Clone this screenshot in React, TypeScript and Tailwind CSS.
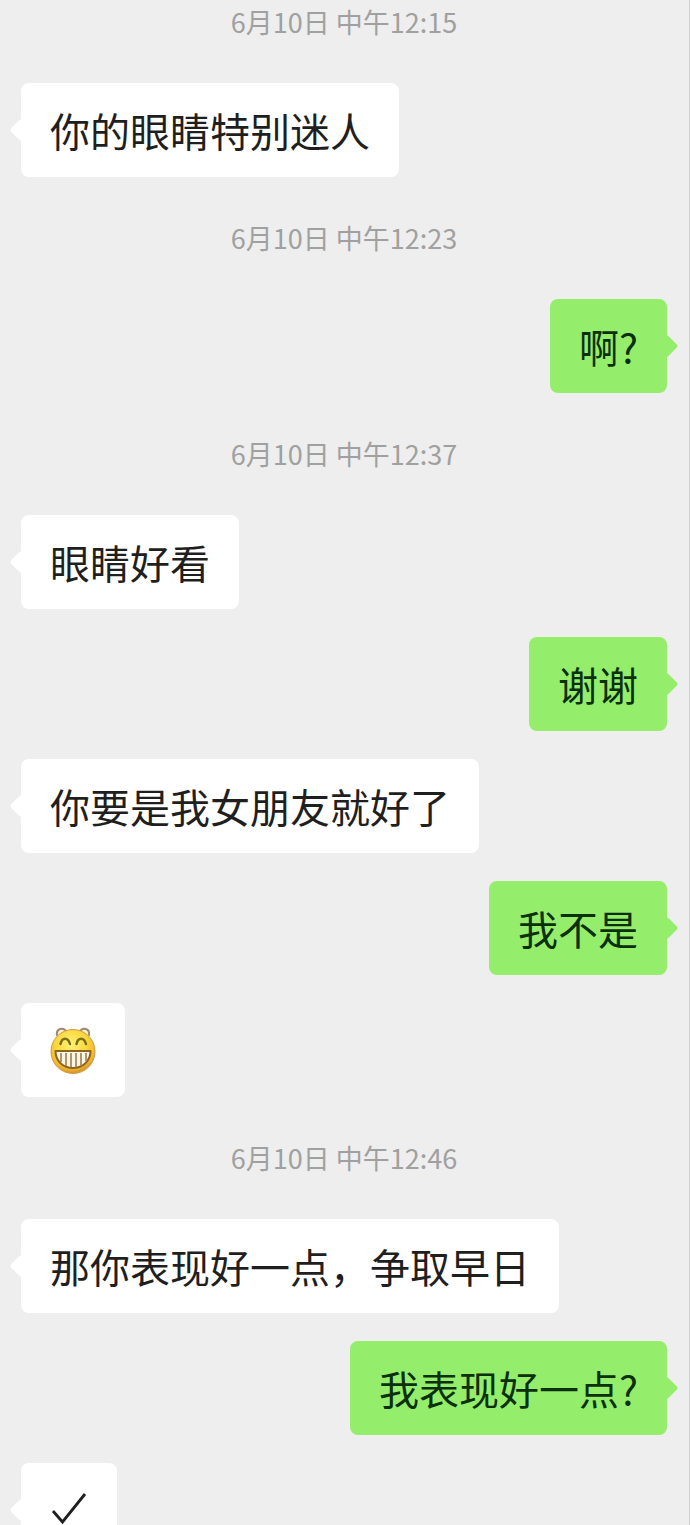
import type { ReactNode } from "react";
import clsx from "clsx";

type Item =
  | { kind: "time"; text: string }
  | { kind: "message"; from: "them" | "me"; content: ReactNode };

function GrinEmoji() {
  return (
    <svg viewBox="0 0 46 48" className="h-12 w-[46px]" role="img" aria-label="呲牙">
      <defs>
        <radialGradient id="face" cx="46%" cy="34%" r="68%">
          <stop offset="0" stopColor="#fff27a" />
          <stop offset="0.5" stopColor="#fbd83f" />
          <stop offset="0.82" stopColor="#f0b62e" />
          <stop offset="1" stopColor="#c98a2a" />
        </radialGradient>
      </defs>
      {/* ears */}
      <path d="M7 9 C6 3 13 0 17 6" fill="#fbf3cf" stroke="#9c8a70" strokeWidth="2" strokeLinecap="round" />
      <path d="M29 6 C33 0 40 3 39 9" fill="#fbf3cf" stroke="#9c8a70" strokeWidth="2" strokeLinecap="round" />
      <circle cx="23" cy="25.5" r="22" fill="url(#face)" stroke="#cf9a40" strokeWidth="1" />
      {/* eyes */}
      <path d="M10.5 18 C12 11 18 11 20 18" fill="none" stroke="#77701a" strokeWidth="2.4" strokeLinecap="round" />
      <path d="M26.5 18 C28 11 34 11 36 18" fill="none" stroke="#77701a" strokeWidth="2.4" strokeLinecap="round" />
      {/* mouth and teeth */}
      <path d="M5.5 25 H40.5 C40.5 35 33 42 23 42 C13 42 5.5 35 5.5 25 Z" fill="#fff8e4" stroke="#8f6420" strokeWidth="2" strokeLinejoin="round" />
      <path d="M11 27 V36 M16 27 V40 M21 27 V41 M26 27 V41 M31 27 V40 M36 27 V35" stroke="#a98a62" strokeWidth="1.8" />
    </svg>
  );
}

function CheckMark() {
  return (
    <svg viewBox="0 0 38 48" className="h-12 w-[38px]" role="img" aria-label="对勾">
      <path d="M3 25 L12.5 36 L35 8" fill="none" stroke="#1f1f1f" strokeWidth="2.8" />
    </svg>
  );
}

const items: Item[] = [
  { kind: "time", text: "6月10日 中午12:15" },
  { kind: "message", from: "them", content: "你的眼睛特别迷人" },
  { kind: "time", text: "6月10日 中午12:23" },
  { kind: "message", from: "me", content: "啊?" },
  { kind: "time", text: "6月10日 中午12:37" },
  { kind: "message", from: "them", content: "眼睛好看" },
  { kind: "message", from: "me", content: "谢谢" },
  { kind: "message", from: "them", content: "你要是我女朋友就好了" },
  { kind: "message", from: "me", content: "我不是" },
  { kind: "message", from: "them", content: <GrinEmoji /> },
  { kind: "time", text: "6月10日 中午12:46" },
  { kind: "message", from: "them", content: "那你表现好一点，争取早日" },
  { kind: "message", from: "me", content: "我表现好一点?" },
  { kind: "message", from: "them", content: <CheckMark /> },
];

function TimeLabel({ text }: { text: string }) {
  return (
    <time className="block py-3.5 text-center text-[27px] leading-[38px] text-[#a0a0a0]">
      {text}
    </time>
  );
}

function Bubble({ from, children }: { from: "them" | "me"; children: ReactNode }) {
  const mine = from === "me";

  return (
    <div className={clsx("flex", mine ? "justify-end" : "justify-start")}>
      <div
        className={clsx(
          "relative rounded-lg px-[29px] py-[23px] text-[40px] leading-[48px]",
          mine ? "bg-[#95ee6b] text-[#0c300c]" : "bg-white text-[#1f1f1f]"
        )}
      >
        {/* Tail */}
        <span
          className={clsx(
            "absolute top-1/2 size-4 -translate-y-1/2 rotate-45 rounded-xs",
            mine ? "-right-2 bg-[#95ee6b]" : "-left-2 bg-white"
          )}
        />
        <div className="relative">{children}</div>
      </div>
    </div>
  );
}

export default function App() {
  return (
    <div className="h-screen overflow-hidden border-r border-[#cfcfcf] bg-[#eeeeee] font-['Noto_Sans_CJK_SC',sans-serif]">
      {/* The list is scrolled slightly past its first time label */}
      <main className="-mt-[11px] flex flex-col gap-7 pr-[22px] pl-[21px]">
        {items.map((item, i) =>
          item.kind === "time" ? (
            <TimeLabel key={i} text={item.text} />
          ) : (
            <Bubble key={i} from={item.from}>
              {item.content}
            </Bubble>
          )
        )}
      </main>
    </div>
  );
}
